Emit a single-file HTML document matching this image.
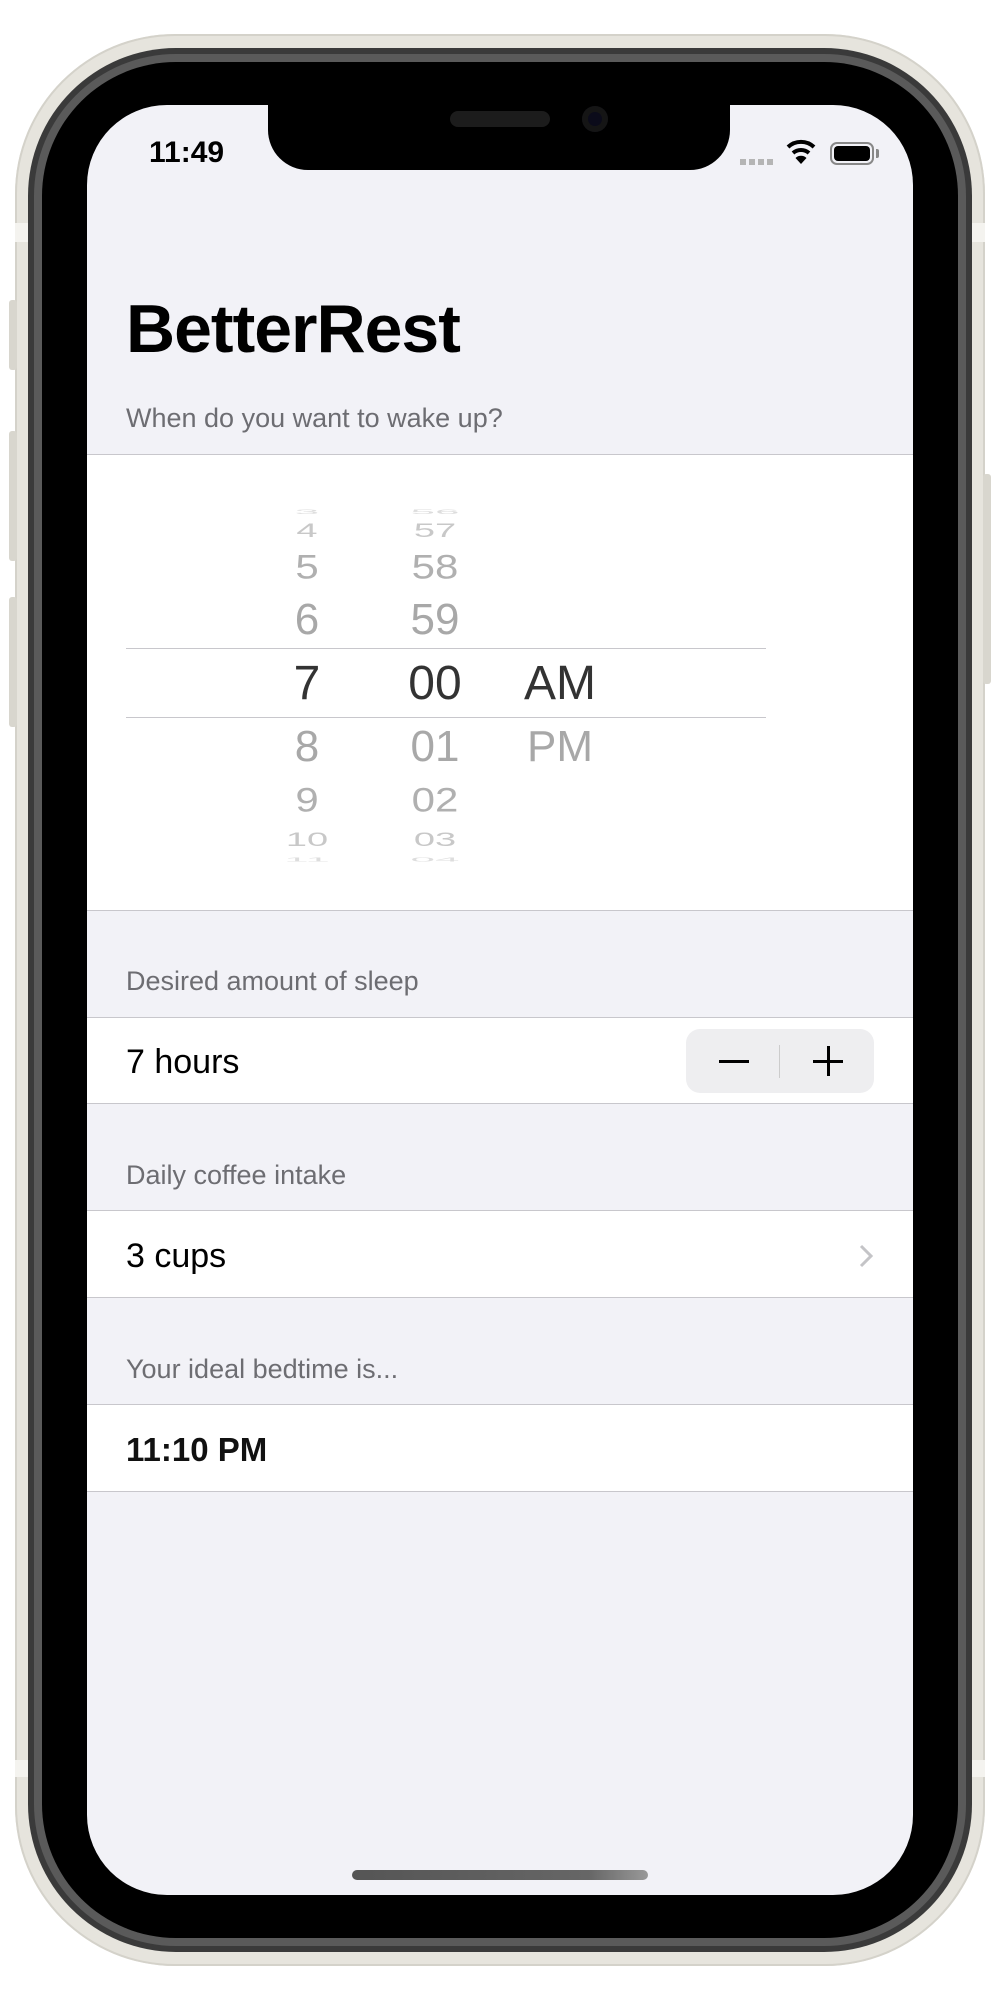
<!DOCTYPE html>
<html><head><meta charset="utf-8"><style>
*{margin:0;padding:0;box-sizing:border-box}
body{width:1000px;height:2000px;background:#fff;position:relative;overflow:hidden;font-family:"Liberation Sans",sans-serif}
.abs{position:absolute}
.frame{left:15px;top:34px;width:970px;height:1932px;border-radius:160px;background:#e6e4dd;box-shadow:inset 0 0 0 2px #d4d2ca}
.band1{left:28px;top:48px;width:944px;height:1904px;border-radius:148px;background:#3a3a3a}
.band2{left:34px;top:54px;width:932px;height:1892px;border-radius:142px;background:#5a5a5a}
.band3{left:42px;top:62px;width:916px;height:1876px;border-radius:134px;background:#000}
.screen{left:87px;top:105px;width:826px;height:1790px;border-radius:80px;background:#f2f2f7;overflow:hidden}
.notch{left:268px;top:95px;width:462px;height:75px;background:#000;border-radius:0 0 40px 40px}
.btn{background:#d8d6ce;border-radius:3px}
.ant{background:#f4f3ef}
.t{position:absolute;white-space:nowrap}
.hdr{color:#6d6d72;font-size:27px}
.row{position:absolute;left:87px;width:826px;background:#fff;border-top:1px solid #c8c7cc;border-bottom:1px solid #c8c7cc}
.pk{position:absolute;width:120px;text-align:center;color:#a8a8a8;font-size:44px;line-height:44px}
</style></head><body>
<div class="abs frame"></div>
<div class="abs ant" style="left:15px;top:223px;width:14px;height:19px"></div>
<div class="abs ant" style="left:971px;top:223px;width:14px;height:19px"></div>
<div class="abs ant" style="left:15px;top:1760px;width:14px;height:17px"></div>
<div class="abs ant" style="left:971px;top:1760px;width:14px;height:17px"></div>
<div class="abs btn" style="left:9px;top:300px;width:8px;height:70px"></div>
<div class="abs btn" style="left:9px;top:431px;width:8px;height:130px"></div>
<div class="abs btn" style="left:9px;top:597px;width:8px;height:130px"></div>
<div class="abs btn" style="left:983px;top:474px;width:8px;height:210px"></div>
<div class="abs band1"></div>
<div class="abs band2"></div>
<div class="abs band3"></div>
<div class="abs screen"></div>
<div class="abs notch"></div>
<div class="abs" style="left:450px;top:111px;width:100px;height:16px;border-radius:8px;background:#1c1c1c"></div>
<div class="abs" style="left:582px;top:106px;width:26px;height:26px;border-radius:50%;background:#0b0b1a;box-shadow:inset 0 0 0 6px #151515"></div>

<div class="t" style="left:149px;top:136px;font-size:30px;font-weight:bold;color:#000">11:49</div>
<div class="abs" style="left:740px;top:159px;width:34px;height:6px;background:repeating-linear-gradient(90deg,#b5b5b5 0 6px,transparent 6px 9px)"></div>
<svg class="abs" style="left:786px;top:138px" width="30" height="28" viewBox="0 0 30 28"><path d="M2 9 A19 19 0 0 1 28 9" stroke="#000" stroke-width="4" fill="none"/><path d="M7 15 A12 12 0 0 1 23 15" stroke="#000" stroke-width="4" fill="none"/><path d="M15 26 L9.5 20 A8 8 0 0 1 20.5 20 Z" fill="#000"/></svg>
<div class="abs" style="left:830px;top:142px;width:44px;height:23px;border:2px solid #888;border-radius:7px;padding:2px"><div style="width:100%;height:100%;background:#000;border-radius:4px"></div></div>
<div class="abs" style="left:876px;top:149px;width:3px;height:9px;background:#888;border-radius:0 2px 2px 0"></div>

<div class="t" style="left:126px;top:290px;font-size:68px;font-weight:bold;color:#000;letter-spacing:-1px">BetterRest</div>
<div class="t hdr" style="left:126px;top:403px">When do you want to wake up?</div>

<div class="row" style="top:454px;height:457px;border-top:1px solid #c8c7cc"></div>
<div class="abs" style="left:126px;top:648px;width:640px;height:1px;background:#c8c7cc"></div>
<div class="abs" style="left:126px;top:717px;width:640px;height:1px;background:#c8c7cc"></div>

<div class="pk" style="left:247px;top:490px;transform:scaleY(.15);color:#ddd">3</div>
<div class="pk" style="left:247px;top:509px;transform:scaleY(.5);color:#c8c8c8;font-size:38px">4</div>
<div class="pk" style="left:247px;top:545px;transform:scaleY(.82);color:#b0b0b0;font-size:42px">5</div>
<div class="pk" style="left:247px;top:598px">6</div>
<div class="pk" style="left:247px;top:660px;color:#333;font-size:48px;line-height:48px">7</div>
<div class="pk" style="left:247px;top:725px">8</div>
<div class="pk" style="left:247px;top:778px;transform:scaleY(.82);color:#b0b0b0;font-size:42px">9</div>
<div class="pk" style="left:247px;top:818px;transform:scaleY(.5);color:#c8c8c8;font-size:38px">10</div>
<div class="pk" style="left:247px;top:838px;transform:scaleY(.12);color:#ddd">11</div>

<div class="pk" style="left:375px;top:490px;transform:scaleY(.15);color:#ddd">56</div>
<div class="pk" style="left:375px;top:509px;transform:scaleY(.5);color:#c8c8c8;font-size:38px">57</div>
<div class="pk" style="left:375px;top:545px;transform:scaleY(.82);color:#b0b0b0;font-size:42px">58</div>
<div class="pk" style="left:375px;top:598px">59</div>
<div class="pk" style="left:375px;top:660px;color:#333;font-size:48px;line-height:48px">00</div>
<div class="pk" style="left:375px;top:725px">01</div>
<div class="pk" style="left:375px;top:778px;transform:scaleY(.82);color:#b0b0b0;font-size:42px">02</div>
<div class="pk" style="left:375px;top:818px;transform:scaleY(.5);color:#c8c8c8;font-size:38px">03</div>
<div class="pk" style="left:375px;top:838px;transform:scaleY(.12);color:#ddd">04</div>

<div class="pk" style="left:500px;top:660px;color:#333;font-size:48px;line-height:48px">AM</div>
<div class="pk" style="left:500px;top:725px">PM</div>

<div class="t hdr" style="left:126px;top:966px">Desired amount of sleep</div>
<div class="row" style="top:1017px;height:87px"></div>
<div class="t" style="left:126px;top:1043px;font-size:34px;color:#000">7 hours</div>
<div class="abs" style="left:686px;top:1029px;width:188px;height:64px;background:#eeeef0;border-radius:14px"></div>
<div class="abs" style="left:779px;top:1045px;width:1px;height:33px;background:#ccc"></div>
<div class="abs" style="left:719px;top:1060px;width:30px;height:2.5px;background:#000"></div>
<div class="abs" style="left:813px;top:1060px;width:30px;height:2.5px;background:#000"></div>
<div class="abs" style="left:827px;top:1046px;width:2.5px;height:30px;background:#000"></div>

<div class="t hdr" style="left:126px;top:1160px">Daily coffee intake</div>
<div class="row" style="top:1210px;height:88px"></div>
<div class="t" style="left:126px;top:1237px;font-size:34px;color:#000">3 cups</div>
<svg class="abs" style="left:858px;top:1243px" width="16" height="26" viewBox="0 0 16 26"><path d="M3 3 L13 13 L3 23" stroke="#c4c4c7" stroke-width="3" fill="none"/></svg>

<div class="t hdr" style="left:126px;top:1354px">Your ideal bedtime is...</div>
<div class="row" style="top:1404px;height:88px"></div>
<div class="t" style="left:126px;top:1431px;font-size:33px;font-weight:bold;color:#111">11:10 PM</div>

<div class="abs" style="left:352px;top:1870px;width:296px;height:10px;border-radius:5px;background:linear-gradient(90deg,#555,#666 80%,#999)"></div>
</body></html>
